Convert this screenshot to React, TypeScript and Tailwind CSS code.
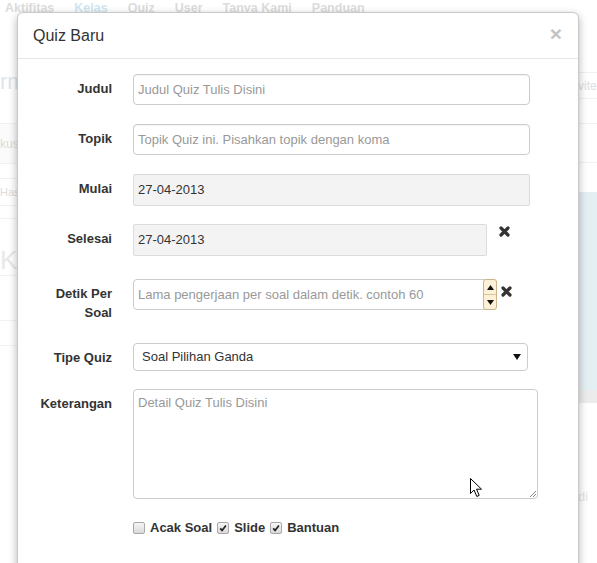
import React from "react";

function RemoveIcon() {
  return (
    <svg width="11" height="11" viewBox="0 0 11 11">
      <path d="M2 2 L9 9 M9 2 L2 9" stroke="#333" strokeWidth="3.2" strokeLinecap="round" />
    </svg>
  );
}

function Checkbox({ checked }: { checked?: boolean }) {
  return (
    <span className="w-[12px] h-[12px] rounded-[2px] border border-[#a8a8a8] bg-linear-to-b from-[#f6f6f6] to-[#dadada] flex items-center justify-center">
      {checked && (
        <svg width="8" height="8" viewBox="0 0 8 8">
          <path d="M1.2 4.4 L3.1 6.4 L6.9 1.4" stroke="#222" strokeWidth="1.7" fill="none" />
        </svg>
      )}
    </span>
  );
}

function Label({ children }: { children: React.ReactNode }) {
  return (
    <div className="w-[94px] shrink-0 text-right pt-[5px] leading-[20px] text-[13px] font-bold text-[#333]">
      {children}
    </div>
  );
}

const textInput =
  "h-[31px] border border-[#ccc] rounded-[4px] bg-white flex items-center pl-[4px] text-[13px] text-[#999] shadow-[inset_0_1px_1px_rgba(0,0,0,0.05)]";
const readonlyInput =
  "h-[32px] border border-[#dcdcdc] rounded-[2px] bg-[#f3f3f3] flex items-center pl-[4px] text-[13px] text-[#333]";

export default function App() {
  return (
    <div className="relative w-[597px] h-[563px] overflow-hidden bg-white font-['Liberation_Sans',Arial,sans-serif]">
      {/* page behind the dialog */}
      <div className="flex gap-[20px] pl-[5px] h-[16px] leading-[16px] text-[12.5px] font-bold text-[#dcdcdc]">
        <span>Aktifitas</span>
        <span className="text-[#cfe6f0]">Kelas</span>
        <span>Quiz</span>
        <span>User</span>
        <span>Tanya Kami</span>
        <span>Panduan</span>
      </div>
      <div className="flex justify-between">
        <div className="w-[17px] overflow-hidden whitespace-nowrap text-[#e0e3e6]">
          <div className="mt-[52px] h-[55px] text-[22px] leading-[28px] text-right text-[#dde5ec]">rm</div>
          <div className="border-t border-[#f1f1f1] h-[40px] bg-[#fbfbfb] flex items-center text-[12px] text-[#dcdcdc]">kus</div>
          <div className="border-t border-[#f1f1f1] h-[15px]" />
          <div className="border-t border-[#f1f1f1] h-[27px] flex items-center text-[11px] text-[#dcdcdc]">Has</div>
          <div className="border-t border-[#f1f1f1] h-[13px]" />
          <div className="border-t border-[#f3f3f3] h-[57px] flex items-end text-[26px] leading-[30px] text-[#e8e8e8]">Ki</div>
          <div className="border-t border-[#f3f3f3] h-[45px]" />
          <div className="border-t border-[#f3f3f3] h-[25px]" />
          <div className="border-t border-[#f3f3f3]" />
        </div>
        <div className="w-[19px] overflow-hidden whitespace-nowrap text-[#dedede] text-[12px]">
          <div className="mt-[56px] border-t border-[#f2f2f2] h-[26px] flex items-center">vite</div>
          <div className="border-t border-[#f2f2f2] h-[25px]" />
          <div className="border-t border-[#f2f2f2] h-[39px]" />
          <div className="border-t border-[#f2f2f2] h-[30px]" />
          <div className="h-[198px] bg-[#e4eff3]" />
          <div className="h-[13px] bg-[#ececec]" />
          <div className="mt-[84px] text-[13px] text-[#e4e4e4]">di</div>
        </div>
      </div>

      {/* dialog */}
      <div className="absolute left-[17px] top-[12px] w-[562px] h-[600px] bg-white border border-[#c9c9c9] rounded-[6px] shadow-[0_3px_9px_rgba(0,0,0,0.3)]">
        <div className="h-[46px] border-b border-[#e5e5e5] flex items-center justify-between pl-[15px] pr-[16px]">
          <span className="text-[16px] text-[#333]">Quiz Baru</span>
          <span className="text-[21px] font-bold leading-none text-[#c4c4c4] -mt-[4px]">×</span>
        </div>

        <div className="flex flex-col pt-[15px]">
          <div className="flex items-start h-[50px]">
            <Label>Judul</Label>
            <div className={`ml-[21px] w-[397px] ${textInput}`}>Judul Quiz Tulis Disini</div>
          </div>

          <div className="flex items-start h-[50px]">
            <Label>Topik</Label>
            <div className={`ml-[21px] w-[397px] ${textInput}`}>Topik Quiz ini. Pisahkan topik dengan koma</div>
          </div>

          <div className="flex items-start h-[50px]">
            <Label>Mulai</Label>
            <div className={`ml-[21px] w-[397px] ${readonlyInput}`}>27-04-2013</div>
          </div>

          <div className="flex items-start h-[55px]">
            <Label>Selesai</Label>
            <div className={`ml-[21px] w-[354px] ${readonlyInput}`}>27-04-2013</div>
            <div className="ml-[12px] mt-[2px]">
              <RemoveIcon />
            </div>
          </div>

          <div className="flex items-start h-[64px]">
            <div className="w-[94px] shrink-0 text-right pt-[5px] leading-[19px] text-[13px] font-bold text-[#333]">
              Detik Per
              <br />
              Soal
            </div>
            <div className="ml-[21px] w-[364px] h-[31px] border border-[#ccc] rounded-[4px] bg-white flex">
              <div className="flex-1 flex items-center pl-[4px] text-[13px] text-[#999] whitespace-nowrap overflow-hidden">
                Lama pengerjaan per soal dalam detik. contoh 60
              </div>
              <div className="w-[14px] -my-[1px] -mr-[1px] flex flex-col border border-[#c9b48c] rounded-[3px] bg-[#fdf0d4]">
                <div className="flex-1 flex items-center justify-center border-b border-[#d6c49e]">
                  <svg width="7" height="5" viewBox="0 0 7 5">
                    <path d="M0 5 L3.5 0 L7 5 Z" fill="#111" />
                  </svg>
                </div>
                <div className="flex-1 flex items-center justify-center">
                  <svg width="7" height="5" viewBox="0 0 7 5">
                    <path d="M0 0 L3.5 5 L7 0 Z" fill="#111" />
                  </svg>
                </div>
              </div>
            </div>
            <div className="ml-[4px] mt-[7px]">
              <RemoveIcon />
            </div>
          </div>

          <div className="flex items-start h-[46px]">
            <Label>Tipe Quiz</Label>
            <div className="ml-[21px] w-[395px] h-[28px] border border-[#ccc] rounded-[4px] bg-white flex items-center justify-between pl-[8px] pr-[6px] text-[13px] text-[#333]">
              <span>Soal Pilihan Ganda</span>
              <svg width="8" height="6" viewBox="0 0 8 6">
                <path d="M0 0 L8 0 L4 6 Z" fill="#111" />
              </svg>
            </div>
          </div>

          <div className="flex items-start h-[129px]">
            <Label>Keterangan</Label>
            <div className="relative ml-[21px] w-[405px] h-[110px] border border-[#ccc] rounded-[4px] bg-white pl-[4px] pt-[3px] leading-[20px] text-[13px] text-[#999]">
              Detail Quiz Tulis Disini
              <svg className="absolute right-[1px] bottom-[1px]" width="7" height="7" viewBox="0 0 7 7">
                <path d="M7 1 L1 7 M7 4 L4 7" stroke="#888" strokeWidth="1" />
              </svg>
              <svg className="absolute left-[336px] top-[88px]" width="13" height="20" viewBox="0 0 13 20">
                <path d="M0.5 0.5 L0.5 15.5 L4 12 L6.8 18.5 L9.2 17.4 L6.5 11.2 L11.5 11.2 Z" fill="#fff" stroke="#000" strokeWidth="1" strokeLinejoin="round" />
              </svg>
            </div>
          </div>

          <div className="flex items-center h-[20px] ml-[115px] gap-[5px] text-[13px] font-bold text-[#333]">
            <Checkbox />
            <span>Acak Soal</span>
            <Checkbox checked />
            <span>Slide</span>
            <Checkbox checked />
            <span>Bantuan</span>
          </div>
        </div>
      </div>
    </div>
  );
}
